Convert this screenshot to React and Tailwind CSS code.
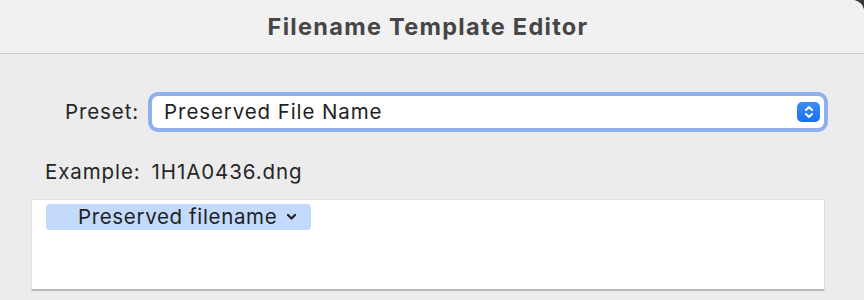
import React from "react";

function Stepper() {
  return (
    <div className="w-[23px] h-[20px] rounded-[5px] bg-gradient-to-b from-[#3b8ff7] to-[#1170f0] flex items-center justify-center">
      <svg width="10" height="14" viewBox="0 0 10 14" fill="none" stroke="white" strokeWidth="2.1" strokeLinecap="round" strokeLinejoin="round">
        <path d="M2 5 L5 2 L8 5" />
        <path d="M2 9 L5 12 L8 9" />
      </svg>
    </div>
  );
}

export default function App() {
  return (
    <div className="w-[864px] h-[300px] bg-[#3a3a3a] overflow-hidden" style={{ fontFamily: "Inter, 'Noto Sans', sans-serif" }}>
      <div className="w-full h-full bg-[#ececec] rounded-tr-[12px] overflow-hidden flex flex-col">
        <div className="h-[54px] shrink-0 bg-[#f1f1f1] border-b border-[#cdcdcd] flex items-center justify-center pr-[8px]">
          <span className="text-[23.5px] font-bold text-[#464646] tracking-[1.3px]">Filename Template Editor</span>
        </div>

        <div className="flex items-center pl-[65px] pr-[36px] mt-[38px]">
          <span className="text-[20.5px] tracking-[0.9px] text-[#262626]">Preset:</span>
          <div className="ml-[9px] flex-1 h-[40px] rounded-[10px] bg-[#8fb0ee] p-[4px]">
            <div className="h-full bg-white rounded-[6px] flex items-center pl-[12px] pr-[4px]">
              <span className="flex-1 text-[20.5px] tracking-[0.9px] text-[#1f1f1f]">Preserved File Name</span>
              <Stepper />
            </div>
          </div>
        </div>

        <div className="pl-[45px] mt-[27px] h-[26px] flex items-center text-[20.5px] tracking-[0.9px] text-[#262626]">
          <span>Example:</span>
          <span className="ml-[11px]">1H1A0436.dng</span>
        </div>

        <div className="ml-[31px] w-[793px] h-[92px] mt-[14px] bg-white border-l border-t border-[#e2e2e2] border-b-2 border-b-[#b9b9b9] shadow-[1px_0_0_#d9d9d9] pt-[4px] pl-[14px]">
          <div className="inline-flex items-center h-[26px] w-[265px] rounded-[4px] bg-[#c3dafc] pl-[32px]">
            <span className="text-[20.5px] tracking-[0.65px] text-[#1f1f1f]">Preserved filename</span>
            <svg className="ml-[9px]" width="11" height="8" viewBox="0 0 11 8" fill="none" stroke="#222" strokeWidth="2.3" strokeLinecap="round" strokeLinejoin="round">
              <path d="M2 2 L5.5 5.5 L9 2" />
            </svg>
          </div>
        </div>
      </div>
    </div>
  );
}
